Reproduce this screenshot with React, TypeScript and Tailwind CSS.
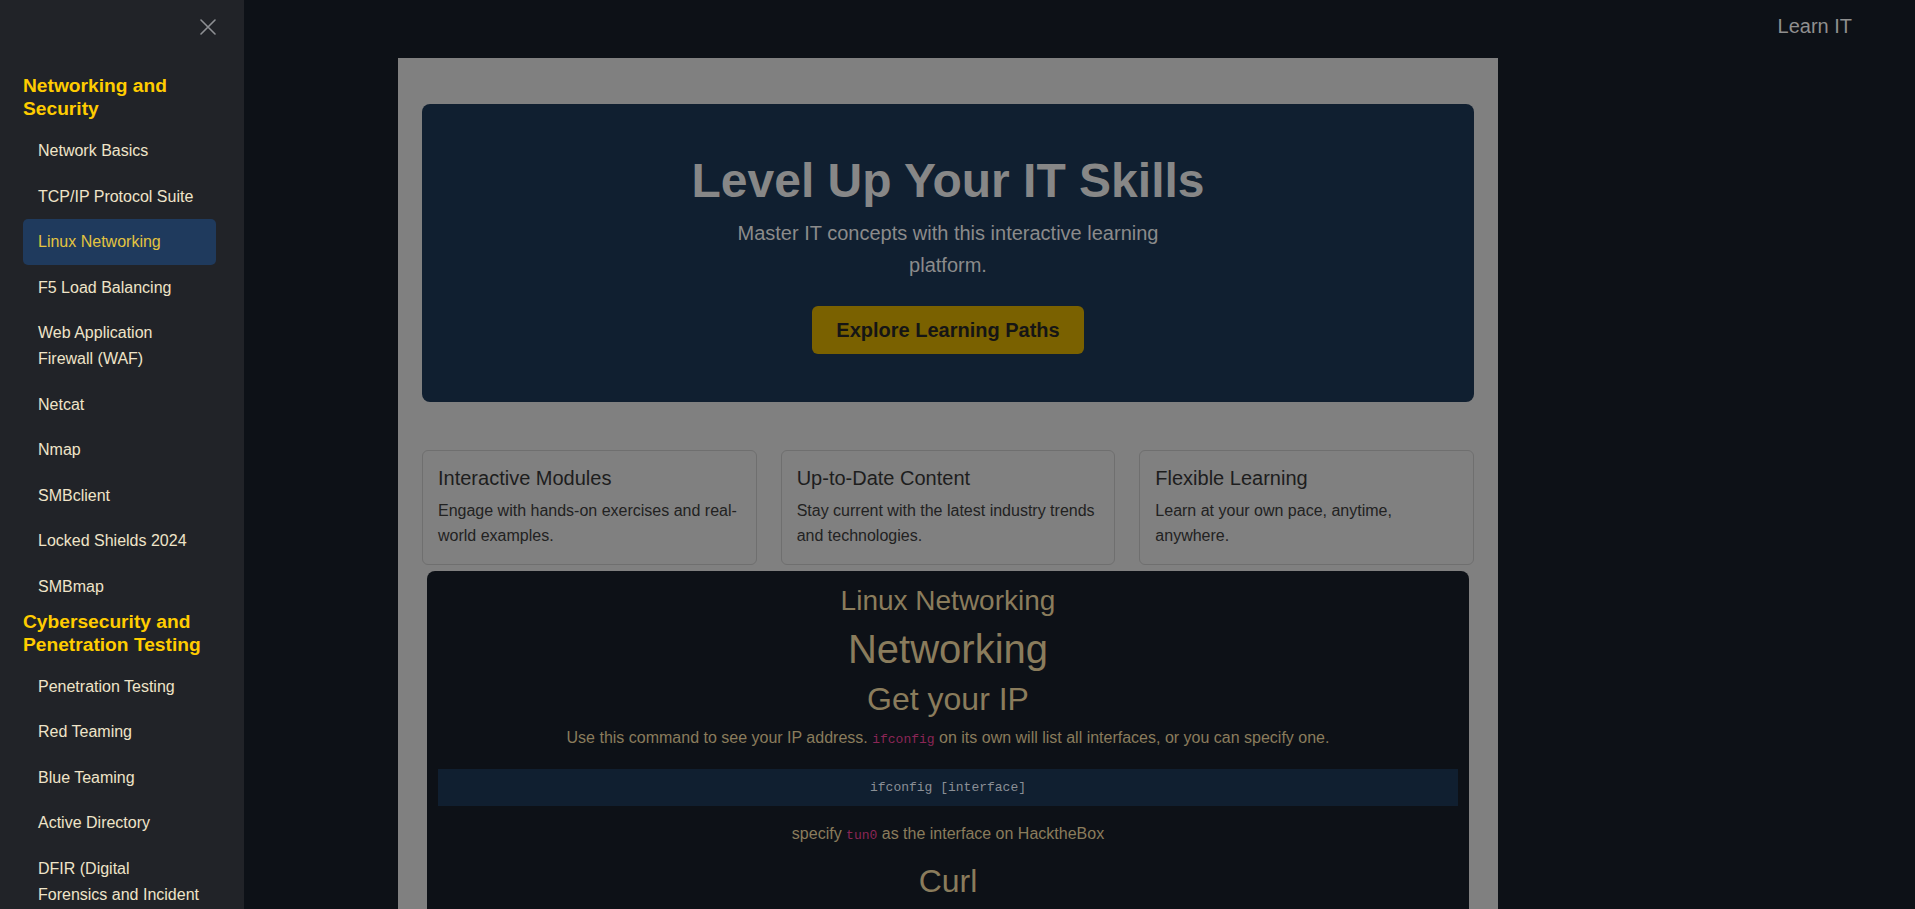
import React from "react";

type Section = { title: string; items: string[] };

const sections: Section[] = [
  {
    title: "Networking and Security",
    items: [
      "Network Basics",
      "TCP/IP Protocol Suite",
      "Linux Networking",
      "F5 Load Balancing",
      "Web Application Firewall (WAF)",
      "Netcat",
      "Nmap",
      "SMBclient",
      "Locked Shields 2024",
      "SMBmap",
    ],
  },
  {
    title: "Cybersecurity and Penetration Testing",
    items: [
      "Penetration Testing",
      "Red Teaming",
      "Blue Teaming",
      "Active Directory",
      "DFIR (Digital Forensics and Incident Response)",
      "Threat Hunting",
      "Malware Analysis",
    ],
  },
];

const features = [
  {
    title: "Interactive Modules",
    desc: "Engage with hands-on exercises and real-world examples.",
  },
  {
    title: "Up-to-Date Content",
    desc: "Stay current with the latest industry trends and technologies.",
  },
  {
    title: "Flexible Learning",
    desc: "Learn at your own pace, anytime, anywhere.",
  },
];

function Sidebar() {
  return (
    <aside className="w-[244px] shrink-0 h-full overflow-hidden bg-[#212328] pl-[23px] pr-[28px] pt-[19px]">
      <div className="flex justify-end h-[16px]">
        <svg width="16" height="16" viewBox="0 0 16 16" fill="none">
          <path d="M1 1L15 15M15 1L1 15" stroke="#8e9094" strokeWidth="1.6" strokeLinecap="round" />
        </svg>
      </div>
      <nav className="mt-[39px]">
        {sections.map((s) => (
          <div key={s.title}>
            <h3 className="text-[19.2px] leading-[23px] font-bold text-[#ffcc00] mb-[8px]">{s.title}</h3>
            <ul>
              {s.items.map((it) => {
                const active = it === "Linux Networking";
                return (
                  <li
                    key={it}
                    className={
                      active
                        ? "px-[15px] py-[10px] text-[16px] leading-[25.6px] rounded-[5px] bg-[#1f3a5d] text-[#e3c440]"
                        : "px-[15px] py-[10px] text-[16px] leading-[25.6px] rounded-[5px] text-[#efe4c8]"
                    }
                  >
                    {it}
                  </li>
                );
              })}
            </ul>
          </div>
        ))}
      </nav>
    </aside>
  );
}

function Mono({ children }: { children: React.ReactNode }) {
  return <code className="font-['Liberation_Mono',monospace] text-[13px] text-[#8b2656]">{children}</code>;
}

export default function App() {
  return (
    <div className="flex h-[909px] w-full overflow-hidden bg-[#0d1117] font-['Liberation_Sans',Arial,sans-serif]">
      <Sidebar />
      <main className="flex-1 min-w-0 h-full overflow-hidden">
        <header className="h-[58px] flex justify-end pr-[63px] pt-[14px]">
          <span className="text-[20px] leading-[24px] text-[#8f8f8f]">Learn IT</span>
        </header>
        <div className="ml-[154px] w-[1100px] bg-[#808080] px-[24px] pt-[46px] pb-[40px]">
          <section className="rounded-[8px] bg-[#101f30] pt-[51px] pb-[48px] flex flex-col items-center text-center">
            <h1 className="text-[48px] leading-[52.8px] font-bold text-[#878787]">Level Up Your IT Skills</h1>
            <p className="mt-[9px] max-w-[480px] text-[20px] leading-[32px] text-[#8b8b8b]">
              Master IT concepts with this interactive learning platform.
            </p>
            <button className="mt-[25px] px-[24px] py-[12px] text-[20px] leading-[24px] font-bold bg-[#7a6100] text-[#151515] rounded-[6px]">
              Explore Learning Paths
            </button>
          </section>

          <div className="mt-[48px] grid grid-cols-3 gap-[24px]">
            {features.map((f) => (
              <div key={f.title} className="border border-[#6f6f6f] rounded-[6px] p-[15px]">
                <h3 className="text-[20px] leading-[24px] text-[#1d1d1d] mb-[8px]">{f.title}</h3>
                <p className="text-[16px] leading-[25.6px] text-[#222222]">{f.desc}</p>
              </div>
            ))}
          </div>

          <section className="mt-[6px] mx-[5px] rounded-[8px] bg-[#0d1117] px-[11px] pt-[13px] pb-[40px] text-center text-[#8a7c5c]">
            <h2 className="text-[28px] leading-[33.6px]">Linux Networking</h2>
            <h1 className="mt-[7px] text-[40px] leading-[48px]">Networking</h1>
            <h2 className="mt-[7px] text-[32px] leading-[38.4px]">Get your IP</h2>
            <p className="mt-[7px] text-[16px] leading-[25.6px]">
              Use this command to see your IP address. <Mono>ifconfig</Mono> on its own will list all interfaces, or you can specify one.
            </p>
            <pre className="mt-[16px] bg-[#101f30] py-[11px] leading-[15px] text-[13px] font-['Liberation_Mono',monospace] text-[#8b8f96]">
              ifconfig [interface]
            </pre>
            <p className="mt-[15px] text-[16px] leading-[25.6px]">
              specify <Mono>tun0</Mono> as the interface on HacktheBox
            </p>
            <h2 className="mt-[14px] text-[32px] leading-[38.4px]">Curl</h2>
            <p className="mt-[12px] text-[16px] leading-[25.6px]">
              Use curl to transfer data from or to a server.
            </p>
          </section>
        </div>
      </main>
    </div>
  );
}
